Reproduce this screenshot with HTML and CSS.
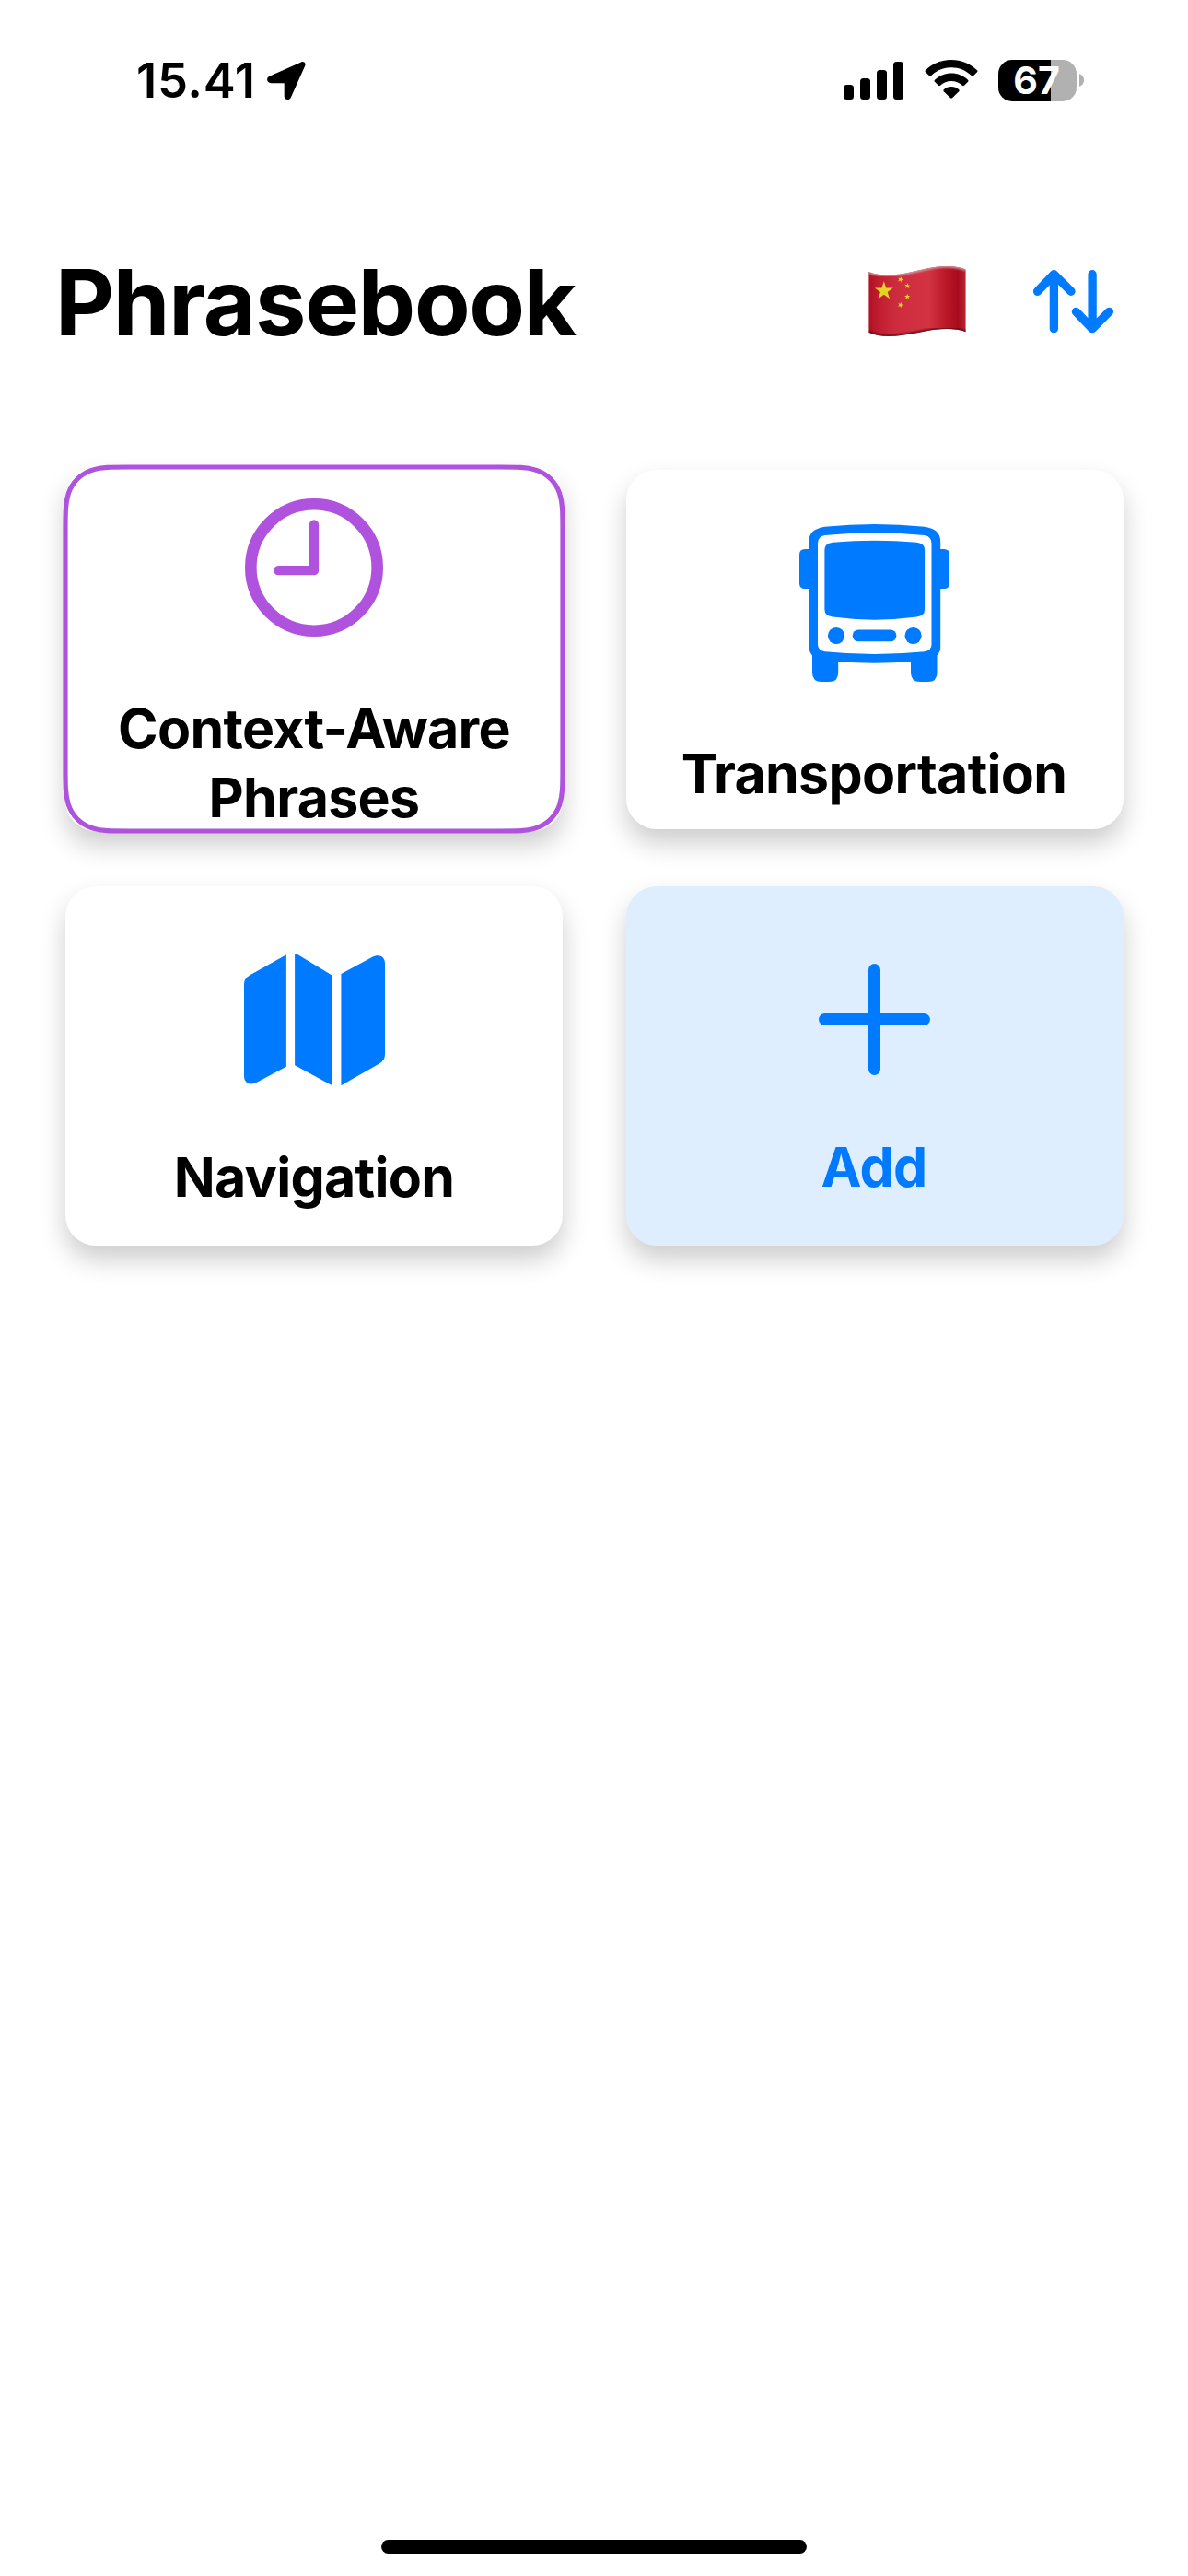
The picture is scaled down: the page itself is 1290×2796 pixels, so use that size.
FILE: index.html
```html
<!DOCTYPE html>
<html lang="en">
<head>
<meta charset="utf-8">
<title>Phrasebook</title>
<link rel="stylesheet" href="styles.css">
</head>
<body>
<div class="screen">
  <div class="status">
    <div class="status-left">
      <span class="time">15.41</span>
      <svg class="location" width="42" height="42" viewBox="0 0 42 42"><path d="M37 .4C40-.8 42.5 1.600 41.200 4.600L25.700 39C24.200 42.300 18.700 41.500 18.700 37.500V23.200H4.500C-.3 23.200-1.500 17.500 2.600 15.700Z"/></svg>
    </div>
    <div class="status-right">
      <svg width="65" height="41" viewBox="0 0 65 41"><rect y="25" width="11" height="16" rx="3.500"/><rect x="18" y="18" width="11" height="23" rx="3.500"/><rect x="36" y="9" width="11" height="32" rx="3.500"/><rect x="54" width="11" height="41" rx="3.500"/></svg>
      <svg class="wifi" width="58" height="42" viewBox="0 0 58 42"><path d="M29 0C40 0 49.500 4.200 57 11.200Q58 12.300 57 13.300L53 17.300Q52 18.200 51 17.300C45 11.500 37.500 8.300 29 8.300S13 11.500 7 17.300Q6 18.200 5 17.300L1 13.300Q0 12.300 1 11.200C8.500 4.200 18 0 29 0Z"/><path d="M29 14.500C36 14.500 42.200 17.200 47 21.700Q48 22.800 47 23.800L43 27.800Q42 28.700 41 27.800C37.700 24.700 33.600 22.900 29 22.900S20.300 24.700 17 27.800Q16 28.700 15 27.800L11 23.800Q10 22.800 11 21.700C15.800 17.200 22 14.500 29 14.500Z"/><path d="M29 29C32 29 35 30.200 37.200 32.200Q38.200 33.200 37.200 34.200L30 41.300Q29 42.200 28 41.300L20.800 34.200Q19.800 33.200 20.800 32.200C23 30.200 26 29 29 29Z"/></svg>
      <div class="battery"><span class="level">67</span></div>
      <svg class="nub" width="5" height="14" viewBox="0 0 5 14"><path d="M0 0Q5 2 5 7T0 14Z"/></svg>
    </div>
  </div>

  <header class="header">
    <h1>Phrasebook</h1>
    <svg class="flag" width="106" height="76" viewBox="0 0 317 228">
      <defs>
        <linearGradient id="cloth" x1="0" x2="1" y1="0" y2="0">
          <stop offset="0" stop-color="#b01022"/><stop offset=".1" stop-color="#c01c30"/><stop offset=".28" stop-color="#cd2c3e"/><stop offset=".62" stop-color="#d23342"/><stop offset=".8" stop-color="#b91728"/><stop offset=".92" stop-color="#a90b1c"/><stop offset="1" stop-color="#ba2434"/>
        </linearGradient>
        <filter id="soft"><feGaussianBlur stdDeviation="3"/></filter>
        <clipPath id="wave"><path d="M0 18C20 26 40 29 62 29C130 29 190 0 252 0C280 0 300 4 317 11V214C300 207 280 204 252 204C190 204 130 228 66 228C40 228 20 224 0 215Z"/></clipPath>
        <path id="star" d="M0-10L2.300-3.100 9.500-3.100 3.700 1.200 5.900 8.100 0 3.900-5.900 8.100-3.700 1.200-9.500-3.100-2.300-3.100Z"/>
      </defs>
      <g clip-path="url(#wave)">
        <rect width="317" height="228" fill="url(#cloth)"/>
        <path d="M0 18C20 26 40 29 62 29C130 29 190 0 252 0C280 0 300 4 317 11" fill="none" stroke="#c9a0a5" stroke-width="9" filter="url(#soft)"/>
        <path d="M0 215C20 224 40 228 66 228C130 228 190 204 252 204C280 204 300 207 317 214" fill="none" stroke="#5c0712" stroke-width="9" filter="url(#soft)"/>
      </g>
      <g fill="#e3d522">
        <use href="#star" transform="translate(50 80) scale(3.150)"/>
        <use href="#star" transform="translate(104 43) rotate(20)"/>
        <use href="#star" transform="translate(126 64) rotate(8)"/>
        <use href="#star" transform="translate(126 99)"/>
        <use href="#star" transform="translate(104 126) rotate(20)"/>
      </g>
    </svg>
    <svg class="sort" width="87" height="69" viewBox="0 0 87 69"><path d="M22.400 63.700V4.700M4.600 23.300 22.400 4.700 41 23.300M64.100 4.700V63.700M46.400 45.300 64.100 63.700 82.400 45.300"/></svg>
  </header>

  <main class="grid">
    <section class="card context">
      <svg width="150" height="150" viewBox="0 0 150 150"><circle cx="75" cy="75" r="68.700" stroke-width="12.600"/><path d="M75 28.500V78.200H36.200" stroke-width="10.300"/></svg>
      <h2>Context-Aware<br>Phrases</h2>
      <svg class="outline" width="540" height="395" viewBox="0 0 540 395"><path stroke-width="5.200" d="M68.800 0H471.200C491 0 500.900 0 509.900 2.900L511.600 3.400C523.200 7.600 532.400 16.800 536.600 28.400C540 39.100 540 49 540 68.800V326.200C540 346 540 355.900 536.600 366.600C532.400 378.200 523.200 387.400 511.600 391.600L509.900 392.100C500.900 395 491 395 471.200 395H68.800C49 395 39.100 395 30.100 392.100L28.400 391.600C16.800 387.400 7.600 378.200 3.400 366.600C0 355.900 0 346 0 326.200V68.800C0 49 0 39.100 3.400 28.400C7.600 16.800 16.800 7.600 28.400 3.400L30.100 2.900C39.100 0 49 0 68.800 0Z"/></svg>
    </section>
    <section class="card transport">
      <svg width="163" height="171" viewBox="0 0 163 171">
        <path fill-rule="evenodd" d="M27.700 2.700Q81.800-2.700 135.900 2.700C147 4.500 153.200 9 153.200 19V27H157Q163 27 163 33V64Q163 70 157 70H153.200V134Q153.200 138 149.500 142.500V161Q149.500 171 140 171H131Q121 171 121 161V149.300Q81.800 152.200 42.200 149.300V161Q42.200 171 32.500 171H24Q14 171 14 161V142.500Q10.400 138 10.400 134V70H6Q0 70 0 64V33Q0 27 6 27H10.400V19C10.400 9 16.500 4.500 27.700 2.700ZM27.700 12Q20 13.500 20 20.500V130.500Q20 137 27.700 138.300Q81.800 143.700 135.900 138.300Q143.500 137 143.500 130.500V20.500Q143.500 13.500 135.900 12Q81.800 6.700 27.700 12Z"/>
        <path d="M36 19.700Q81.800 15.700 127.500 19.700Q136.100 20.700 136.100 28V92.500Q136.100 99.300 127.500 100.600Q81.800 106.800 36 100.600Q27.400 99.300 27.400 92.500V28Q27.400 20.700 36 19.700Z"/>
        <circle cx="40" cy="121" r="9.100"/><circle cx="123.600" cy="121" r="9.100"/><rect x="57.700" y="114.500" width="47.700" height="12.800" rx="6.400"/>
      </svg>
      <h2>Transportation</h2>
    </section>
    <section class="card navigation">
      <svg width="153" height="143" viewBox="0 0 153 143"><path d="M45.900 1.300V122.700L14.400 139.600C6 144 0 140 0 133V33Q0 27 6.500 23.300ZM55.100 0Q57 0 59 1.500L95.800 23.700V143Q94.500 142.700 92.500 141.500L55.100 121.300ZM105.400 22 138.400 4.300C147 -.2 153 3.700 153 10.700V109.500Q153 116 146.500 119.700L110 140.500Q107 142.500 105.400 143Z"/></svg>
      <h2>Navigation</h2>
    </section>
    <section class="card add">
      <svg width="121" height="121" viewBox="0 0 121 121"><path d="M60.500 6.500V114.500M6.500 60.500H114.500" stroke-width="13"/></svg>
      <h2>Add</h2>
    </section>
  </main>
  <div class="home-indicator"></div>
</div>
</body>
</html>
```
FILE: styles.css
```css
* { box-sizing: border-box; }
body {
  margin: 0;
  background: #fff;
  color: #000;
  font-family: Inter, "Liberation Sans", sans-serif;
}
svg { display: block; flex: none; }
h1, h2 { margin: 0; }

.screen {
  width: 1290px;
  height: 2796px;
  display: flex;
  flex-direction: column;
  overflow: hidden;
}

.status {
  height: 177px;
  padding: 57px 113px 0 148px;
  display: flex;
  justify-content: space-between;
  align-items: flex-start;
}
.status-left, .status-right { display: flex; height: 60px; align-items: center; }
.time { width: 142px; font-size: 52.5px; line-height: 60px; font-weight: 600; letter-spacing: 0.7px; white-space: nowrap; }
.location { margin-top: 2px; }
.wifi { margin: -2px 22px 0 23px; }
.battery {
  width: 85px;
  height: 45px;
  padding-right: 2px;
  border-radius: 15px;
  background: linear-gradient(to right, #000 57px, #b1b1b1 57px);
  color: #fff;
  display: flex;
  justify-content: center;
  align-items: center;
}
.level { font-size: 41px; line-height: 45px; font-weight: 700; }
.nub { margin-left: 3px; fill: #b1b1b1; }

.header {
  height: 333px;
  padding: 112px 81px 0 60px;
  display: flex;
  align-items: flex-start;
}
h1 { flex: 1; font-size: 99px; line-height: 78px; font-weight: 700; letter-spacing: -1.3px; }
.flag { margin-right: 73px; }
.sort {
  margin-top: 4px;
  fill: none;
  stroke: #007aff;
  stroke-width: 9.3px;
  stroke-linecap: round;
  stroke-linejoin: round;
}

.grid {
  display: grid;
  grid-template-columns: 540px 540px;
  grid-auto-rows: 390px;
  gap: 62px 69px;
  padding: 0 71px;
}
.card {
  display: flex;
  flex-direction: column;
  align-items: center;
  gap: 62px;
  border-radius: 33px;
  background: #fff;
  fill: #007aff;
  box-shadow: 0 15px 28px rgba(0, 0, 0, 0.2);
}
h2 {
  font-size: 59px;
  line-height: 75px;
  font-weight: 650;
  letter-spacing: -0.7px;
  text-align: center;
  white-space: nowrap;
}
.context {
  position: relative;
  margin: -3px 0 -2px;
  padding-top: 34px;
  fill: none;
  stroke: #af52de;
  stroke-linecap: round;
  stroke-linejoin: round;
}
.outline {
  position: absolute;
  inset: 0;
  overflow: visible;
}
.transport { padding: 59px 2px 0 0; }
.navigation { padding-top: 73px; }
.add {
  padding: 84px 2px 0 0;
  background: #deeeff;
  color: #007aff;
  stroke: #007aff;
  stroke-linecap: round;
}
.add h2 { stroke: none; }

.home-indicator {
  width: 462px;
  height: 15px;
  margin: auto auto 24px;
  border-radius: 8px;
  background: #000;
}
```
